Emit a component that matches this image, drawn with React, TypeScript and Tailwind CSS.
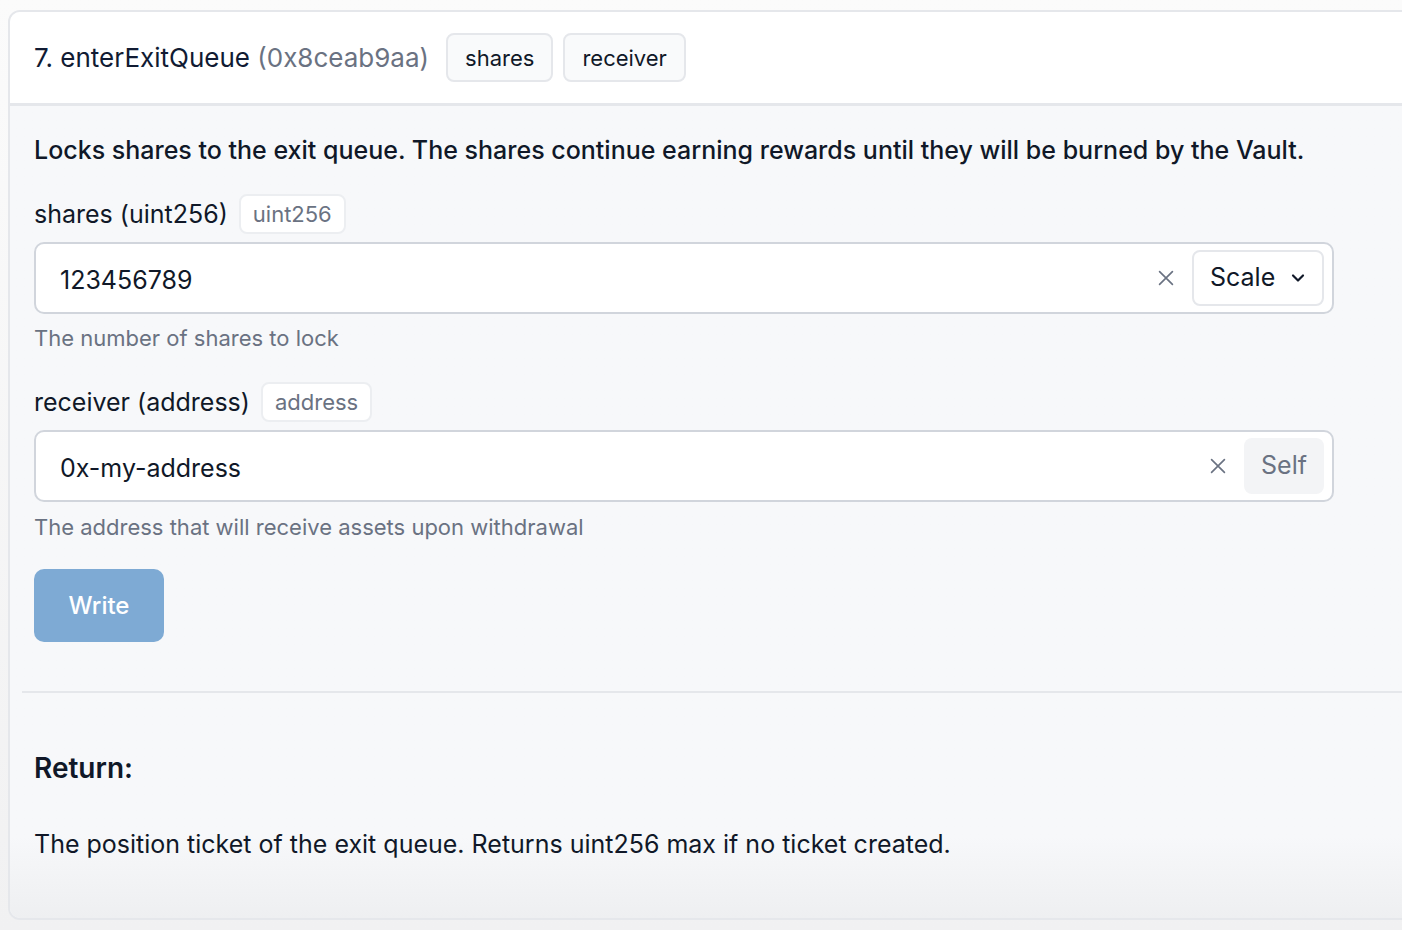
import React, { useState } from 'react';

const XIcon = () => (
    <svg className="w-[22px] h-[22px] text-gray-500" fill="none" viewBox="0 0 24 24" stroke="currentColor">
        <path strokeLinecap="round" strokeLinejoin="round" strokeWidth={1.8} d="M5 5l14 14M19 5L5 19" />
    </svg>
);

const ChevronDown = () => (
    <svg className="w-5 h-5 text-gray-900" fill="none" viewBox="0 0 24 24" stroke="currentColor">
        <path strokeLinecap="round" strokeLinejoin="round" strokeWidth={2.6} d="M6 9l6 6 6-6" />
    </svg>
);

const TypeBadge = ({ text }: { text: string }) => (
    <span className="inline-flex items-center h-[40px] px-[12px] rounded-lg border-2 border-[#eceef1] bg-white text-[22px] leading-none text-gray-500">
        {text}
    </span>
);

const ArgBadge = ({ text }: { text: string }) => (
    <span className="inline-flex items-center h-[49px] px-[17px] rounded-lg border-2 border-gray-200 bg-gray-50 text-[22px] leading-none text-gray-900">
        {text}
    </span>
);

export default function App() {
    const [shares, setShares] = useState('123456789');
    const [receiver, setReceiver] = useState('0x-my-address');

    return (
        <div className="w-[1402px] h-[930px] overflow-hidden bg-gradient-to-b from-[#fbfbfb] to-[#f1f1f2] pt-[10px] pl-[8px]" style={{ fontFamily: 'Inter, "Noto Sans", sans-serif' }}>
            <section className="w-[1420px] h-[910px] rounded-xl border-2 border-gray-200 overflow-hidden flex flex-col bg-[#f7f8fa]">
                {/* Header */}
                <div className="h-[94px] shrink-0 bg-white border-b-[3px] border-gray-200 flex items-center gap-[10px] pl-[24px]">
                    <h2 className="text-[26px] leading-none text-[#111b33] mr-[7px]">
                        7. enterExitQueue <span className="text-gray-500">(0x8ceab9aa)</span>
                    </h2>
                    <ArgBadge text="shares" />
                    <ArgBadge text="receiver" />
                </div>

                {/* Body */}
                <div className="flex-1 flex flex-col bg-gradient-to-b from-[#f7f8fa] from-90% to-[#eeeff1]">
                    <div className="pl-[24px] pt-[28px] w-[1324px]">
                        <p className="text-[25px] font-medium text-gray-900 leading-[32px] whitespace-nowrap">
                            Locks shares to the exit queue. The shares continue earning rewards until they will be burned by the Vault.
                        </p>

                        {/* shares */}
                        <div className="mt-[28px] flex items-center gap-[11px]">
                            <label className="text-[25px] leading-none text-gray-900">shares (uint256)</label>
                            <TypeBadge text="uint256" />
                        </div>
                        <div className="mt-[8px] h-[72px] rounded-[10px] border-2 border-gray-300 bg-white flex items-center pl-[24px] pr-[8px]">
                            <input
                                value={shares}
                                onChange={(e) => setShares(e.target.value)}
                                className="flex-1 bg-transparent outline-none text-[25px] leading-[32px] pt-[3px] text-gray-900"
                            />
                            <button className="mr-[15px]"><XIcon /></button>
                            <button className="h-[56px] w-[132px] pl-[16px] pr-[14px] rounded-lg border-2 border-gray-200 bg-white flex items-center justify-between text-[25px] text-gray-900">
                                Scale <ChevronDown />
                            </button>
                        </div>
                        <p className="mt-[9px] text-[22px] leading-[30px] text-gray-500">The number of shares to lock</p>

                        {/* receiver */}
                        <div className="mt-[29px] flex items-center gap-[11px]">
                            <label className="text-[25px] leading-none text-gray-900">receiver (address)</label>
                            <TypeBadge text="address" />
                        </div>
                        <div className="mt-[8px] h-[72px] rounded-[10px] border-2 border-gray-300 bg-white flex items-center pl-[24px] pr-[8px]">
                            <input
                                value={receiver}
                                onChange={(e) => setReceiver(e.target.value)}
                                className="flex-1 bg-transparent outline-none text-[25px] leading-[32px] pt-[3px] text-gray-900"
                            />
                            <button className="mr-[15px]"><XIcon /></button>
                            <button className="h-[56px] w-[80px] rounded-lg bg-gray-100 text-[25px] text-gray-500">
                                Self
                            </button>
                        </div>
                        <p className="mt-[10px] text-[22px] leading-[30px] text-gray-500">The address that will receive assets upon withdrawal</p>

                        <button className="mt-[27px] h-[73px] w-[130px] rounded-[10px] bg-[#7eaad4] text-white text-[24px] font-medium">
                            Write
                        </button>
                    </div>

                    <div className="mt-[49px] ml-[12px] h-[2px] bg-gray-200" />

                    <div className="pl-[24px]">
                        <h3 className="mt-[57px] text-[28px] leading-[36px] font-semibold text-gray-900">Return:</h3>
                        <p className="mt-[42px] text-[25px] leading-[32px] text-gray-900">
                            The position ticket of the exit queue. Returns uint256 max if no ticket created.
                        </p>
                    </div>
                </div>
            </section>
        </div>
    );
}
